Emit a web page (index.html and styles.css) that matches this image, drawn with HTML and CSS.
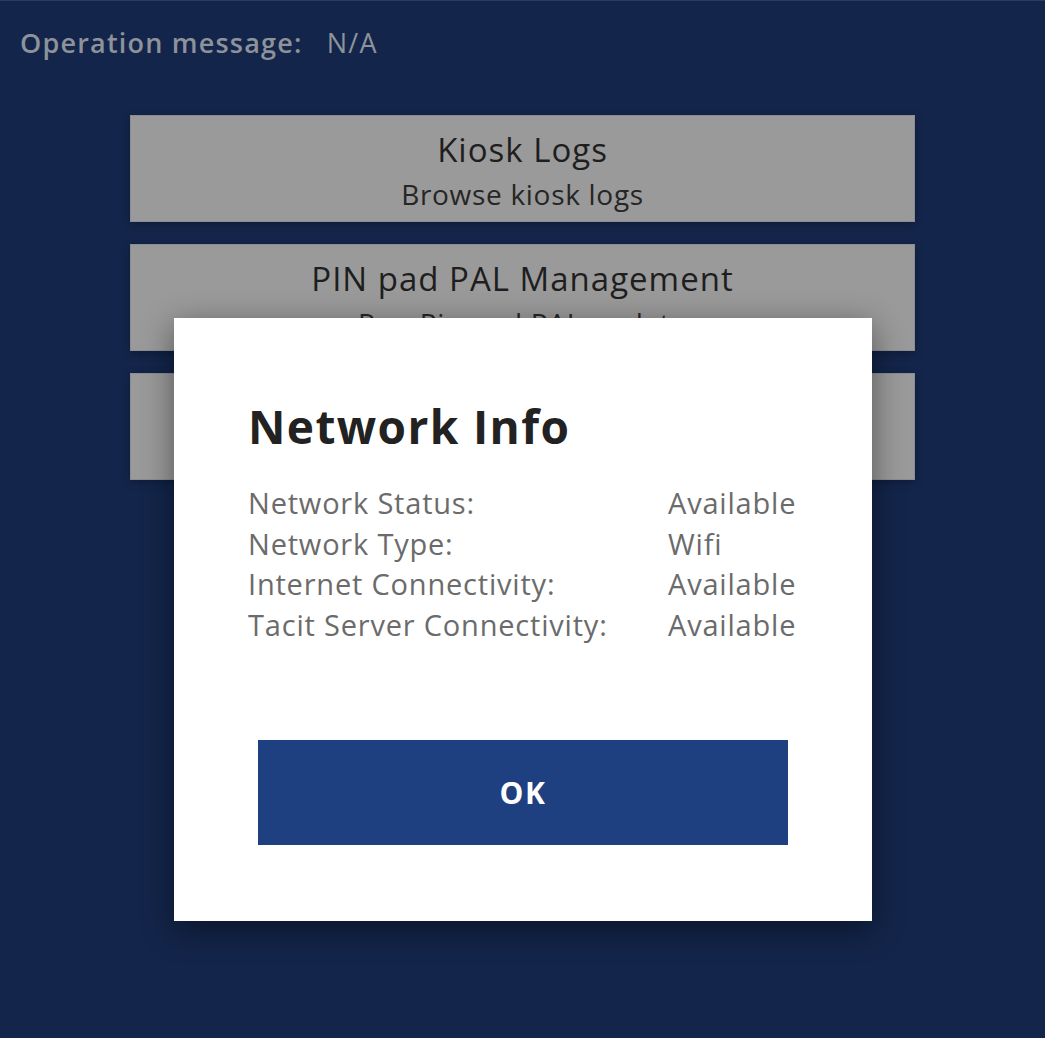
FILE: index.html
```html
<!DOCTYPE html>
<html lang="en">
<head>
    <meta charset="UTF-8">
    <meta name="viewport" content="width=device-width, initial-scale=1.0">
    <title>Kiosk Admin</title>
    <link rel="stylesheet" href="styles.css">
</head>
<body>

    <div class="status-bar">
        <span class="status-label">Operation message:</span>
        <span class="status-value">N/A</span>
    </div>

    <main class="menu">
        <div class="menu-card">
            <h3>Kiosk Logs</h3>
            <p>Browse kiosk logs</p>
        </div>
        <div class="menu-card">
            <h3>PIN pad PAL Management</h3>
            <p>Run Pin pad PAL update</p>
        </div>
        <div class="menu-card">
            <h3>Network Info</h3>
            <p>Show network status</p>
        </div>
    </main>

    <!-- 弹窗 -->
    <div class="dialog">
        <h2 class="dialog-title">Network Info</h2>
        <dl class="info-list">
            <dt>Network Status:</dt><dd>Available</dd>
            <dt>Network Type:</dt><dd>Wifi</dd>
            <dt>Internet Connectivity:</dt><dd>Available</dd>
            <dt>Tacit Server Connectivity:</dt><dd>Available</dd>
        </dl>
        <button class="dialog-btn" type="button">OK</button>
    </div>

</body>
</html>
```

FILE: styles.css
```css
* { margin: 0; padding: 0; box-sizing: border-box; }
html, body { height: 100%; }
body {
    font-family: 'Open Sans', 'Noto Sans', sans-serif;
    background-color: #13254a;
    border-top: 1px solid #2c3c5e;
    color: #222;
    overflow: hidden;
}

.status-bar { padding: 24px 20px 0; font-size: 27px; line-height: 36px; color: #8e929a; letter-spacing: 1.2px; }
.status-label { font-weight: 600; margin-right: 16px; }

.menu { width: 785px; margin: 54px auto 0; display: flex; flex-direction: column; gap: 22px; }
.menu-card {
    height: 107px;
    background: #9a9a9a;
    border: 1px solid #8a8d93;
    text-align: center;
    padding-top: 12px;
    box-shadow: 0 2px 8px rgba(0, 0, 0, 0.25);
}
.menu-card h3 { font-size: 33px; font-weight: 400; line-height: 44px; letter-spacing: 1px; color: #1e1e1e; }
.menu-card p { font-size: 28px; line-height: 44px; color: #262626; letter-spacing: 0.7px; }

/* Dialog */
.dialog {
    position: absolute;
    left: 174px;
    top: 318px;
    width: 698px;
    height: 603px;
    background: #fff;
    padding: 78px 74px 0;
    box-shadow: 0 8px 30px rgba(0, 0, 0, 0.45);
}
.dialog-title { font-size: 46px; font-weight: 700; line-height: 60px; color: #222; letter-spacing: 1.4px; margin-bottom: 27px; }
.info-list {
    display: grid;
    grid-template-columns: 420px 1fr;
    font-size: 29px;
    font-weight: 500;
    line-height: 40.7px;
    letter-spacing: 0.8px;
    color: #6b6b6b;
}
.dialog-btn {
    display: block;
    margin: 94px 0 0 10px;
    width: 530px;
    height: 105px;
    border: none;
    background: #1f4080;
    color: #fff;
    font-family: inherit;
    font-size: 30px;
    font-weight: 700;
    letter-spacing: 1.5px;
}
```
